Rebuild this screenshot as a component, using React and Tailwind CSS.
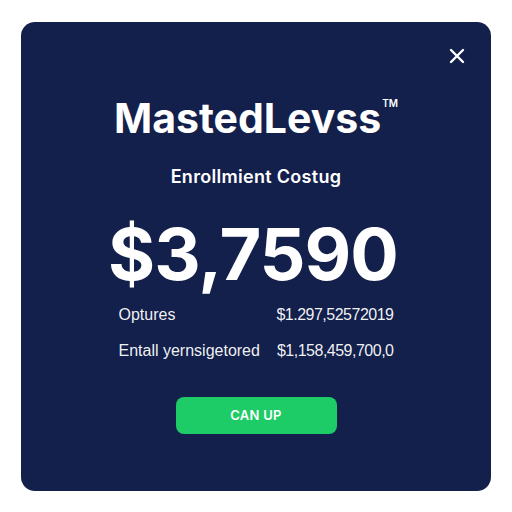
import React from "react";

const App = () => {
  return (
    <div className="w-[512px] h-[512px] bg-white p-[21px] pt-[22px]" style={{ fontFamily: "Inter, 'Open Sans', sans-serif" }}>
      <div className="relative w-[470px] h-[469px] rounded-[14px] bg-[#13204b] flex flex-col items-center text-white">
        {/* close */}
        <button className="absolute top-[26px] right-[26px] text-white">
          <svg width="16" height="16" viewBox="0 0 16 16" fill="none" stroke="currentColor" strokeWidth="2.4" strokeLinecap="round">
            <path d="M2 2L14 14M14 2L2 14" />
          </svg>
        </button>

        {/* brand */}
        <div className="mt-[72px] flex items-start">
          <span className="text-[41px] leading-[48px] font-bold tracking-[0px]">MastedLevss</span>
          <span className="text-[10px] font-semibold mt-[2px] ml-[1px]">TM</span>
        </div>

        <p className="mt-[24px] text-[18px] leading-[22px] font-semibold tracking-[0.3px]">Enrollmient Costug</p>

        <p className="mt-[26px] text-[72px] leading-[80px] font-bold tracking-[-1px] pr-[6px]">$3,7590</p>

        {/* rows */}
        <div className="mt-[11px] w-[275px] flex flex-col gap-[16px] text-[16px] leading-[20px] text-white/95" style={{ fontFamily: "'Liberation Sans', Arial, sans-serif" }}>
          <div className="flex justify-between">
            <span>Optures</span>
            <span className="tracking-[-0.5px]">$1.297,52572019</span>
          </div>
          <div className="flex justify-between">
            <span>Entall yernsigetored</span>
            <span className="tracking-[-0.5px]">$1,158,459,700,0</span>
          </div>
        </div>

        <button className="mt-[36px] w-[161px] h-[37px] rounded-[8px] bg-[#1dcc67] text-white text-[13px] font-semibold tracking-[0.3px]">
          CAN UP
        </button>
      </div>
    </div>
  );
};

export default App;
